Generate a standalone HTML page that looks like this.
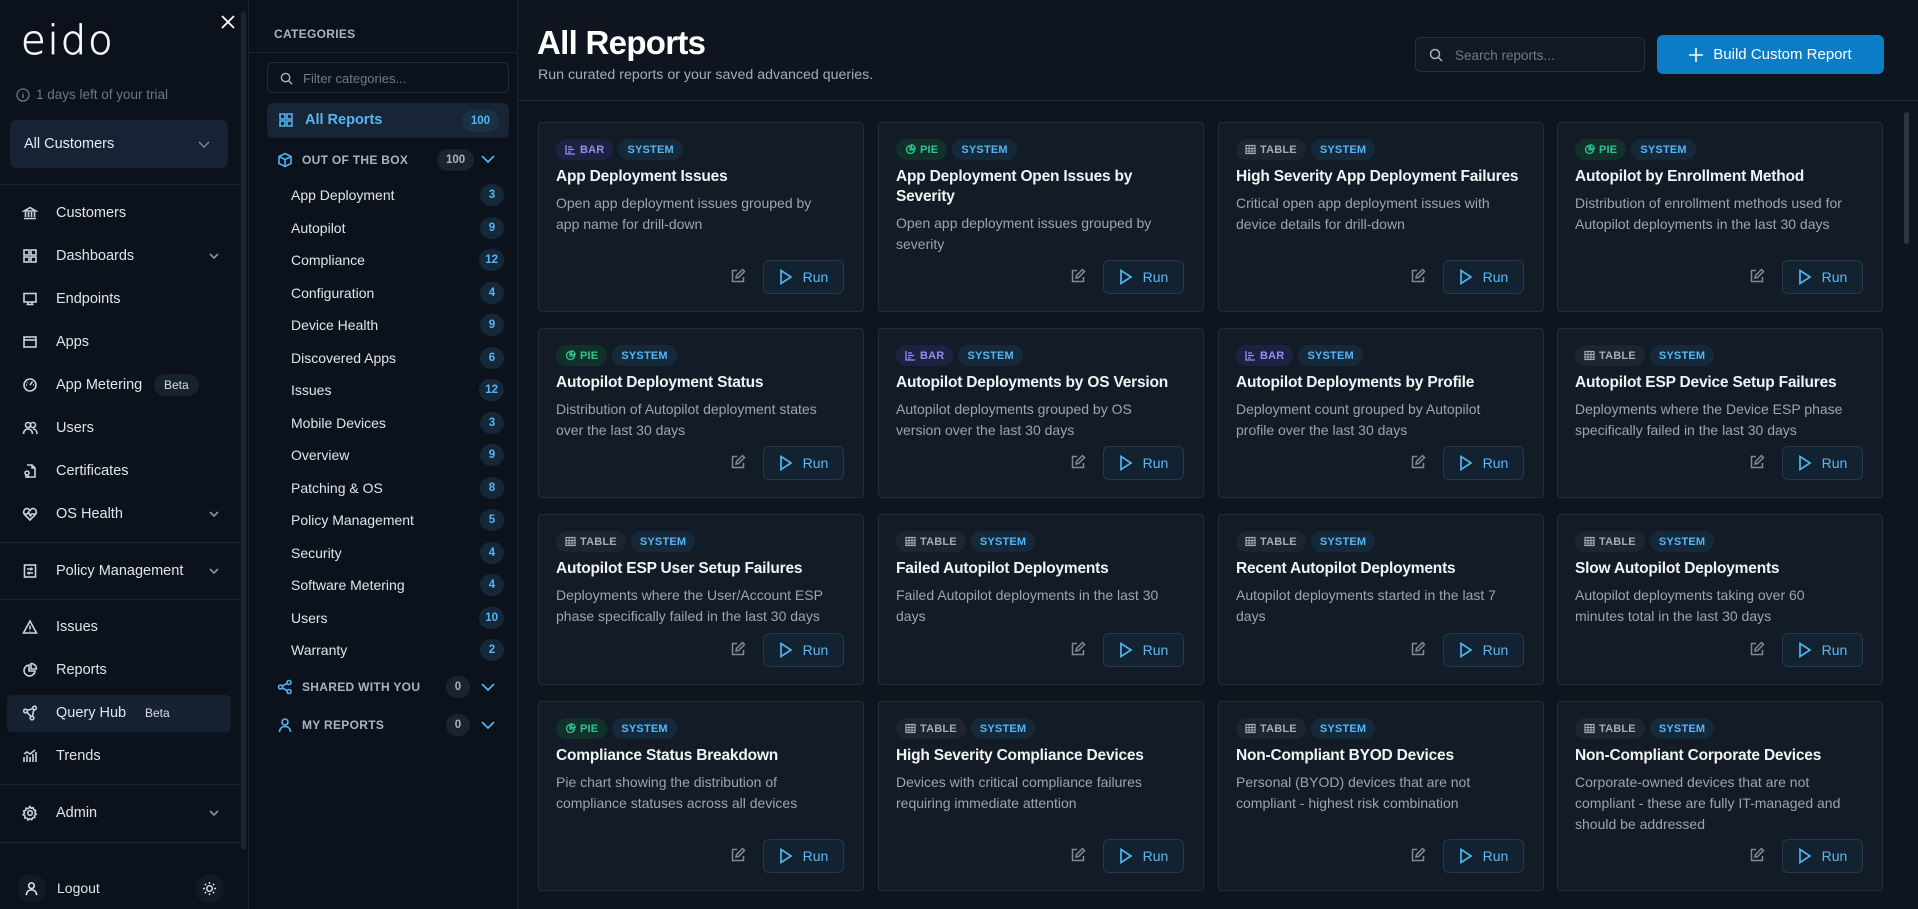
<!DOCTYPE html>
<html><head><meta charset="utf-8"><style>
*{box-sizing:border-box;margin:0;padding:0}
body{width:1918px;height:909px;overflow:hidden;background:#0e151f;font-family:"Liberation Sans",sans-serif;color:#e6ebf1;position:relative}
.abs{position:absolute}
#side{left:0;top:0;width:248px;height:909px;background:#0c121b}
#cat{left:248px;top:0;width:270px;height:909px;background:#0c121b;border-left:1px solid #1a222d;border-right:1px solid #1a222d}
.nav{position:absolute;left:0;width:240px;height:36px;display:flex;align-items:center;font-size:14.5px;color:#dfe5ec}
.nav svg{position:absolute;left:22px;width:16px;height:16px;fill:none;stroke:#c9d1da;stroke-width:1.6}
.nav span.t{position:absolute;left:56px}
.nav .chev{position:absolute;left:208px;width:12px;height:12px;stroke:#8a94a0}
.beta{background:#172230;color:#d8dee5;font-size:12px;border-radius:12px;padding:4px 10px;position:absolute}
.div{position:absolute;left:0;width:240px;height:1px;background:#1c2530}
.ci{position:absolute;left:42px;width:225px;font-size:14px;color:#dfe5ec;display:flex;align-items:center;height:26px}
.cnt{position:absolute;right:12px;min-width:24px;height:22px;border-radius:11px;background:#14283a;color:#56b6f5;font-size:11.5px;font-weight:bold;display:flex;align-items:center;justify-content:center;padding:0 6px}
.sec{position:absolute;left:28px;width:230px;height:24px;display:flex;align-items:center;font-size:12px;font-weight:bold;color:#a9b4c2;letter-spacing:.3px}
.sec svg{width:16px;height:16px;fill:none;stroke:#4fb3f0;stroke-width:1.6;margin-right:9px}
.gc{position:absolute;height:22px;border-radius:11px;background:#1b232d;color:#aab3bd;font-size:11.5px;font-weight:bold;display:flex;align-items:center;justify-content:center;min-width:24px;padding:0 7px}
.card{position:absolute;width:326px;background:#131b26;border:1px solid #222d3a;border-radius:4px}
.bd{display:inline-flex;align-items:center;height:21px;border-radius:11px;padding:0 9px;font-size:11px;font-weight:bold;margin-right:5px;letter-spacing:.2px}
.bar{background:#1e2240;color:#8d90f2}.pie{background:#11302b;color:#2fc68e}.tab{background:#1d2530;color:#a3acb7}.sys{background:#16293a;color:#56b6f5}
.badges{position:absolute;left:17px;top:16px;display:flex}
.ct{position:absolute;left:17px;right:10px;top:44px;font-size:15.5px;font-weight:bold;color:#f1f4f7;line-height:20px;letter-spacing:-.2px}
.cd{width:280px;font-size:14px;font-weight:normal;color:#9aa5b2;line-height:21px;margin-top:6px;letter-spacing:0}
.run{position:absolute;right:19px;bottom:17px;width:81px;height:34px;border:1px solid #26384a;background:#132230;border-radius:6px;color:#5cb8f5;font-size:14px;display:flex;align-items:center;justify-content:center;gap:10px}
.run svg{width:14px;height:16px;fill:none;stroke:#4fb3f0;stroke-width:1.7}
.ed{position:absolute;right:117px;bottom:27px;width:16px;height:16px;fill:none;stroke:#7f8a96;stroke-width:1.5}
</style></head><body>

<div id="side" class="abs">
  <div class="abs" style="left:21px;top:18px;font-size:40px;color:#f4f6f8;letter-spacing:2px;font-family:'DejaVu Sans',sans-serif;font-weight:200;-webkit-text-stroke:0.8px #f4f6f8">eido</div>
  <svg class="abs" style="left:221px;top:15px" width="14" height="14" viewBox="0 0 14 14"><path d="M1 1L13 13M13 1L1 13" stroke="#fff" stroke-width="1.8"/></svg>
  <div class="abs" style="left:16px;top:87px;font-size:13.5px;color:#6b7888;display:flex;align-items:center;gap:6px"><svg width="14" height="14" viewBox="0 0 14 14"><circle cx="7" cy="7" r="6" fill="none" stroke="#6b7888" stroke-width="1.3"/><path d="M7 6v4M7 4v.5" stroke="#6b7888" stroke-width="1.4"/></svg>1 days left of your trial</div>
  <div class="abs" style="left:10px;top:120px;width:218px;height:48px;background:#172335;border-radius:6px;font-size:14.5px;color:#e6ebf1;padding:16px 14px">All Customers<svg style="position:absolute;right:18px;top:21px" width="12" height="8" viewBox="0 0 12 8"><path d="M1 1l5 5 5-5" fill="none" stroke="#7d8896" stroke-width="1.4"/></svg></div>
  <div class="div" style="top:184px"></div>

  <div class="nav" style="top:195px"><svg viewBox="0 0 16 16"><path d="M2 6h12L8 2.5zM3.5 7v5M6.5 7v5M9.5 7v5M12.5 7v5M2 13.5h12"/></svg><span class="t">Customers</span></div>
  <div class="nav" style="top:238px"><svg viewBox="0 0 16 16"><rect x="2" y="2" width="5" height="5"/><rect x="9" y="2" width="5" height="5"/><rect x="2" y="9" width="5" height="5"/><rect x="9" y="9" width="5" height="5"/></svg><span class="t">Dashboards</span><svg class="chev" viewBox="0 0 12 12"><path d="M2 4l4 4 4-4"/></svg></div>
  <div class="nav" style="top:281px"><svg viewBox="0 0 16 16"><rect x="2" y="2.5" width="12" height="8.5"/><path d="M6 11v2.5M10 11v2.5M4.5 13.5h7"/></svg><span class="t">Endpoints</span></div>
  <div class="nav" style="top:324px"><svg viewBox="0 0 16 16"><rect x="2" y="3" width="12" height="10"/><path d="M2 6h12"/></svg><span class="t">Apps</span></div>
  <div class="nav" style="top:367px"><svg viewBox="0 0 16 16"><circle cx="8" cy="8" r="6"/><path d="M8 8l2.5-3.5M5 5.5l.5.5M4 8h1M11 8h1"/></svg><span class="t">App Metering</span><span class="beta" style="left:154px">Beta</span></div>
  <div class="nav" style="top:410px"><svg viewBox="0 0 16 16"><circle cx="6" cy="5" r="2.5"/><circle cx="11" cy="5" r="2.5"/><path d="M1.5 14c0-3 2-5 4.5-5s4.5 2 4.5 5M11 9c2.5 0 4 2 4 5"/></svg><span class="t">Users</span></div>
  <div class="nav" style="top:453px"><svg viewBox="0 0 16 16"><path d="M5 2h5l3 3v9H5M10 2v3h3"/><circle cx="5" cy="10" r="2"/><path d="M4 12v3M6 12v3"/></svg><span class="t">Certificates</span></div>
  <div class="nav" style="top:496px"><svg viewBox="0 0 16 16"><path d="M8 14L2.5 8.5C0.5 6 2.5 2 5.5 2.5 7 3 8 4.5 8 4.5S9 3 10.5 2.5C13.5 2 15.5 6 13.5 8.5z"/><path d="M3 8h2.5l1-2 2 4 1-2H13"/></svg><span class="t">OS Health</span><svg class="chev" viewBox="0 0 12 12"><path d="M2 4l4 4 4-4"/></svg></div>
  <div class="div" style="top:542px"></div>
  <div class="nav" style="top:553px"><svg viewBox="0 0 16 16"><rect x="2.5" y="2" width="11" height="12"/><path d="M5 6h6M5 10h6M9 4.5v3M7 8.5v3"/></svg><span class="t">Policy Management</span><svg class="chev" viewBox="0 0 12 12"><path d="M2 4l4 4 4-4"/></svg></div>
  <div class="div" style="top:599px"></div>
  <div class="nav" style="top:609px"><svg viewBox="0 0 16 16"><path d="M8 2L1.5 14h13zM8 6.5v4M8 12v.5"/></svg><span class="t">Issues</span></div>
  <div class="nav" style="top:652px"><svg viewBox="0 0 16 16"><path d="M7 3a5.5 5.5 0 1 0 6 6H7z"/><path d="M9 1.5v5.5h5.5A5.5 5.5 0 0 0 9 1.5z"/></svg><span class="t">Reports</span></div>
  <div class="abs" style="left:7px;top:695px;width:224px;height:37px;background:#152130;border-radius:5px"></div>
  <div class="nav" style="top:695px"><svg viewBox="0 0 16 16"><circle cx="3.5" cy="6" r="1.8"/><circle cx="12.5" cy="3" r="1.8"/><circle cx="10" cy="13" r="1.8"/><path d="M5.2 5.5l5.6-2M5 7.2l4 4.5M11.8 4.8l-1.4 6.4"/></svg><span class="t">Query Hub</span><span class="beta" style="left:135px">Beta</span></div>
  <div class="nav" style="top:738px"><svg viewBox="0 0 16 16"><path d="M2 14V9M5 14V7M8 14V9M11 14V6M14 14V4M2 6l3-2 3 2 5-4"/></svg><span class="t">Trends</span></div>
  <div class="div" style="top:784px"></div>
  <div class="nav" style="top:795px"><svg viewBox="0 0 16 16"><circle cx="8" cy="8" r="2.3"/><path d="M8 1.5l1.2 1.8 2.1-.6.4 2.1 2 .8-.8 2 1.3 1.6-1.8 1.2.3 2.1-2.1.2-.9 2-2-1-1.7 1.3-1-1.9-2.2-.1.2-2.1-1.8-1.2 1.3-1.7-.8-2 2-.7.4-2.1 2.1.5z"/></svg><span class="t">Admin</span><svg class="chev" viewBox="0 0 12 12"><path d="M2 4l4 4 4-4"/></svg></div>
  <div class="div" style="top:842px"></div>
  <div class="abs" style="left:17px;top:874px;width:29px;height:29px;border-radius:50%;background:#111a25"></div>
  <svg class="abs" style="left:24px;top:881px" width="15" height="15" viewBox="0 0 16 16" fill="none" stroke="#dfe5ec" stroke-width="1.6"><circle cx="8" cy="5" r="3"/><path d="M2.5 15c0-3.5 2.5-5.5 5.5-5.5s5.5 2 5.5 5.5"/></svg>
  <div class="abs" style="left:57px;top:880px;font-size:14px;color:#dfe5ec">Logout</div>
  <div class="abs" style="left:195px;top:874px;width:29px;height:29px;border-radius:50%;background:#111a25"></div>
  <svg class="abs" style="left:202px;top:881px" width="15" height="15" viewBox="0 0 16 16" fill="none" stroke="#dfe5ec" stroke-width="1.5"><circle cx="8" cy="8" r="3"/><path d="M8 1v2M8 13v2M1 8h2M13 8h2M3 3l1.4 1.4M11.6 11.6L13 13M3 13l1.4-1.4M11.6 4.4L13 3"/></svg>
  <div class="abs" style="left:241px;top:12px;width:5px;height:838px;background:#1c242e;border-radius:3px"></div>
</div>

<div id="cat" class="abs">
  <div class="abs" style="left:25px;top:27px;font-size:12px;font-weight:bold;color:#aab4c0;letter-spacing:.3px">CATEGORIES</div>
  <div class="abs" style="left:0;top:52px;width:268px;height:1px;background:#1c2530"></div>
  <div class="abs" style="left:18px;top:62px;width:242px;height:31px;border:1px solid #222c38;border-radius:6px;font-size:13px;color:#6f7b89;padding:8px 0 0 35px">Filter categories...
    <svg style="position:absolute;left:12px;top:9px" width="13" height="13" viewBox="0 0 14 14" fill="none" stroke="#aab4c0" stroke-width="1.5"><circle cx="6" cy="6" r="4.5"/><path d="M9.5 9.5L13 13"/></svg></div>
  <div class="abs" style="left:18px;top:103px;width:242px;height:35px;background:#172536;border-radius:6px"></div>
  <svg class="abs" style="left:30px;top:113px" width="14" height="14" viewBox="0 0 14 14" fill="none" stroke="#56b6f5" stroke-width="1.5"><rect x="1" y="1" width="5" height="5"/><rect x="8" y="1" width="5" height="5"/><rect x="1" y="8" width="5" height="5"/><rect x="8" y="8" width="5" height="5"/></svg>
  <div class="abs" style="left:56px;top:112px;font-size:14.5px;font-weight:bold;color:#56b6f5">All Reports</div>
  <div class="cnt" style="right:18px;top:110px;background:#1a3044;padding:0 9px">100</div>

  <div class="sec" style="top:148px"><svg viewBox="0 0 16 16"><path d="M8 1.5l6 3v7l-6 3-6-3v-7zM2 4.5l6 3 6-3M8 7.5v7"/></svg>OUT OF THE BOX</div>
  <div class="gc" style="left:188px;top:149px;padding:0 9px">100</div>
  <svg class="abs" style="left:232px;top:154px" width="14" height="10" viewBox="0 0 14 10"><path d="M1 2l6 6 6-6" fill="none" stroke="#4fb3f0" stroke-width="1.7"/></svg>

  <div class="ci" style="top:182px">App Deployment<span class="cnt">3</span></div>
  <div class="ci" style="top:215px">Autopilot<span class="cnt">9</span></div>
  <div class="ci" style="top:247px">Compliance<span class="cnt">12</span></div>
  <div class="ci" style="top:280px">Configuration<span class="cnt">4</span></div>
  <div class="ci" style="top:312px">Device Health<span class="cnt">9</span></div>
  <div class="ci" style="top:345px">Discovered Apps<span class="cnt">6</span></div>
  <div class="ci" style="top:377px">Issues<span class="cnt">12</span></div>
  <div class="ci" style="top:410px">Mobile Devices<span class="cnt">3</span></div>
  <div class="ci" style="top:442px">Overview<span class="cnt">9</span></div>
  <div class="ci" style="top:475px">Patching &amp; OS<span class="cnt">8</span></div>
  <div class="ci" style="top:507px">Policy Management<span class="cnt">5</span></div>
  <div class="ci" style="top:540px">Security<span class="cnt">4</span></div>
  <div class="ci" style="top:572px">Software Metering<span class="cnt">4</span></div>
  <div class="ci" style="top:605px">Users<span class="cnt">10</span></div>
  <div class="ci" style="top:637px">Warranty<span class="cnt">2</span></div>

  <div class="sec" style="top:675px"><svg viewBox="0 0 16 16"><circle cx="3.5" cy="8" r="2"/><circle cx="12" cy="3.5" r="2"/><circle cx="12" cy="12.5" r="2"/><path d="M5.3 7l4.9-2.5M5.3 9l4.9 2.5"/></svg>SHARED WITH YOU</div>
  <div class="gc" style="left:197px;top:676px">0</div>
  <svg class="abs" style="left:232px;top:682px" width="14" height="10" viewBox="0 0 14 10"><path d="M1 2l6 6 6-6" fill="none" stroke="#4fb3f0" stroke-width="1.7"/></svg>
  <div class="sec" style="top:713px"><svg viewBox="0 0 16 16"><circle cx="8" cy="5" r="3"/><path d="M2.5 15c0-3.5 2.5-5.5 5.5-5.5s5.5 2 5.5 5.5"/></svg>MY REPORTS</div>
  <div class="gc" style="left:197px;top:714px">0</div>
  <svg class="abs" style="left:232px;top:720px" width="14" height="10" viewBox="0 0 14 10"><path d="M1 2l6 6 6-6" fill="none" stroke="#4fb3f0" stroke-width="1.7"/></svg>
</div>

<div class="abs" style="left:537px;top:24px;font-size:33px;font-weight:bold;color:#fff;letter-spacing:-.7px">All Reports</div>
<div class="abs" style="left:538px;top:67px;font-size:14.2px;color:#a3adb9">Run curated reports or your saved advanced queries.</div>
<div class="abs" style="left:1415px;top:37px;width:230px;height:35px;border:1px solid #27313d;border-radius:6px;background:#111923;font-size:13.5px;color:#6f7b89;padding:10px 0 0 39px">Search reports...
  <svg style="position:absolute;left:13px;top:10px" width="14" height="14" viewBox="0 0 14 14" fill="none" stroke="#aab4c0" stroke-width="1.5"><circle cx="6" cy="6" r="4.5"/><path d="M9.5 9.5L13 13"/></svg></div>
<div class="abs" style="left:1657px;top:35px;width:227px;height:39px;background:#0c7cc6;border-radius:6px;font-size:15px;color:#fff;display:flex;align-items:center;justify-content:center;gap:10px"><svg width="14" height="14" viewBox="0 0 14 14"><path d="M7 0v14M0 7h14" stroke="#fff" stroke-width="1.6"/></svg>Build Custom Report</div>
<div class="abs" style="left:518px;top:100px;width:1400px;height:1px;background:#1f2833"></div>
<div class="abs" style="left:1904px;top:112px;width:5px;height:132px;background:#2a3542;border-radius:3px"></div>

<div id="cards"></div>
<script>
const I={bar:'<svg width="11" height="11" viewBox="0 0 11 11" style="margin-right:4px"><path d="M1 1v9h9M3 3h4M3 5.5h6M3 8h3" fill="none" stroke="#8d90f2" stroke-width="1.3"/></svg>',
pie:'<svg width="11" height="11" viewBox="0 0 11 11" style="margin-right:4px"><path d="M5 1.5a4 4 0 1 0 4.5 4.5H5zM6.5 0.8v3.7h3.7A4 4 0 0 0 6.5.8z" fill="none" stroke="#2fc68e" stroke-width="1.3"/></svg>',
tab:'<svg width="11" height="11" viewBox="0 0 11 11" style="margin-right:4px"><rect x="1" y="1.5" width="9" height="8" fill="none" stroke="#a3acb7" stroke-width="1.2"/><path d="M1 4.5h9M1 7h9M4 1.5v8M7 1.5v8" stroke="#a3acb7" stroke-width="1"/></svg>'};
const L={bar:'BAR',pie:'PIE',tab:'TABLE'};
const D=[
['bar','App Deployment Issues','Open app deployment issues grouped by app name for drill-down'],
['pie','App Deployment Open Issues by Severity','Open app deployment issues grouped by severity'],
['tab','High Severity App Deployment Failures','Critical open app deployment issues with device details for drill-down'],
['pie','Autopilot by Enrollment Method','Distribution of enrollment methods used for Autopilot deployments in the last 30 days'],
['pie','Autopilot Deployment Status','Distribution of Autopilot deployment states over the last 30 days'],
['bar','Autopilot Deployments by OS Version','Autopilot deployments grouped by OS version over the last 30 days'],
['bar','Autopilot Deployments by Profile','Deployment count grouped by Autopilot profile over the last 30 days'],
['tab','Autopilot ESP Device Setup Failures','Deployments where the Device ESP phase specifically failed in the last 30 days'],
['tab','Autopilot ESP User Setup Failures','Deployments where the User/Account ESP phase specifically failed in the last 30 days'],
['tab','Failed Autopilot Deployments','Failed Autopilot deployments in the last 30 days'],
['tab','Recent Autopilot Deployments','Autopilot deployments started in the last 7 days'],
['tab','Slow Autopilot Deployments','Autopilot deployments taking over 60 minutes total in the last 30 days'],
['pie','Compliance Status Breakdown','Pie chart showing the distribution of compliance statuses across all devices'],
['tab','High Severity Compliance Devices','Devices with critical compliance failures requiring immediate attention'],
['tab','Non-Compliant BYOD Devices','Personal (BYOD) devices that are not compliant - highest risk combination'],
['tab','Non-Compliant Corporate Devices','Corporate-owned devices that are not compliant - these are fully IT-managed and should be addressed']];
const X=[538,878,1218,1557],R=[[122,190],[328,170],[514,171],[701,190]];
let h='';
D.forEach((d,i)=>{const c=i%4,r=Math.floor(i/4);
h+=`<div class="card" style="left:${X[c]}px;top:${R[r][0]}px;height:${R[r][1]}px"><div class="badges"><span class="bd ${d[0]}">${I[d[0]]}${L[d[0]]}</span><span class="bd sys">SYSTEM</span></div><div class="ct">${d[1]}<div class="cd">${d[2]}</div></div><svg class="ed" viewBox="0 0 16 16"><path d="M7 2.5H2.5v11h11V9M6 10l.5-2.5 6-6 2 2-6 6z"/></svg><div class="run"><svg viewBox="0 0 14 16"><path d="M2 1.5l10 6.5-10 6.5z"/></svg>Run</div></div>`;});
document.getElementById('cards').innerHTML=h;
</script>
</body></html>
